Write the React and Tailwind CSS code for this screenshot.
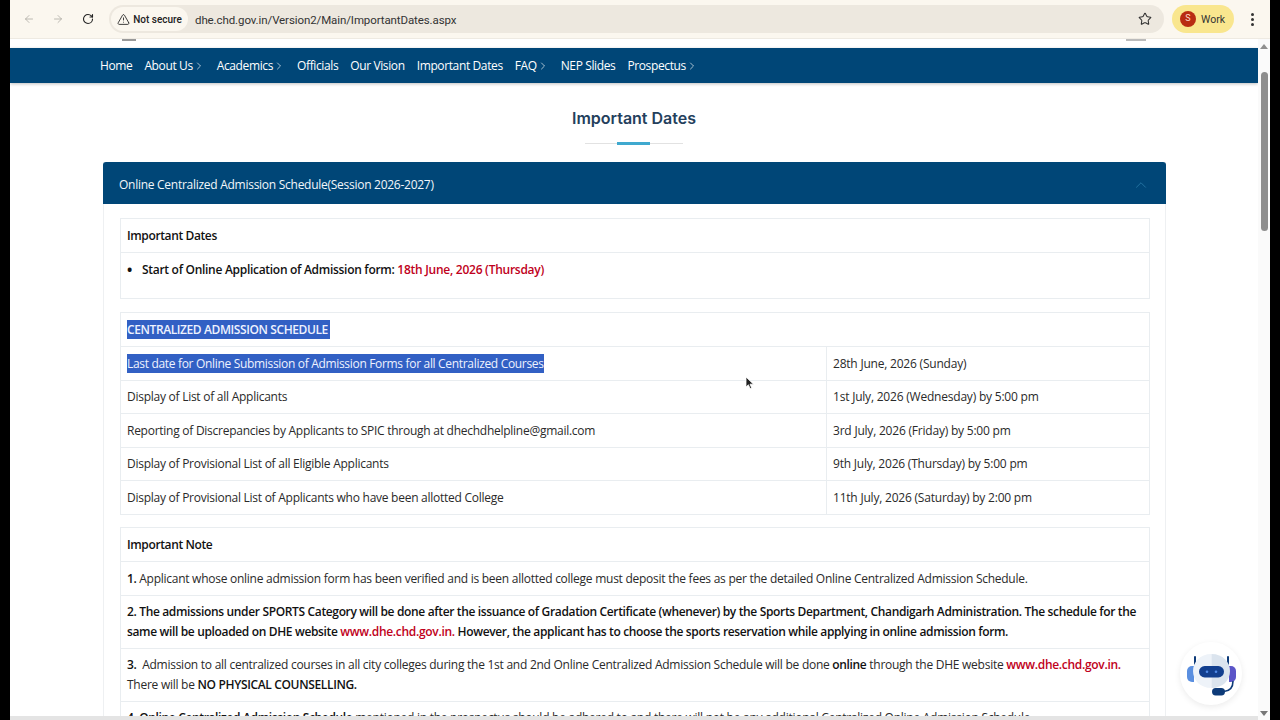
import React from "react";
import { ArrowLeft, ArrowRight, RotateCw, TriangleAlert, Star, ChevronRight, ChevronUp } from "lucide-react";

const NavItem = ({ label, chevron }) => (
  <span className="flex items-center whitespace-nowrap">
    {label}
    {chevron && <ChevronRight size={12} strokeWidth={1.3} />}
  </span>
);

const Red = ({ children }) => <span className="text-[#c00020] font-semibold tracking-[-0.3px]">{children}</span>;
const B = ({ children }) => <span className="font-semibold text-[#111] tracking-[-0.35px]">{children}</span>;

const Row = ({ a, b, selected }) => (
  <div className="flex h-[33.5px] border-t border-[#e9edf0] items-center">
    <div className="w-[706px] pl-[6px] h-full flex items-center border-r border-[#e9edf0]">
      {selected ? <span className="bg-[#3260c4] text-[#eef2ff] h-[19px] flex items-center tracking-[-0.32px]">{a}</span> : a}
    </div>
    <div className="pl-[6px] tracking-[-0.21px]">{b}</div>
  </div>
);

export default function App() {
  return (
    <div className="w-[1280px] h-[720px] bg-black overflow-hidden px-[10px] text-[#2a2a2a]" style={{ fontFamily: '"Open Sans", "Noto Sans", sans-serif' }}>
      <div className="w-[1260px] h-[720px] flex flex-col bg-white">
        {/* browser toolbar */}
        <div className="h-[39px] shrink-0 bg-[#fbf7ef] border-b border-[#eeeae2] flex items-center">
          <div className="flex items-center w-[99px] shrink-0 pl-[13px] gap-[17px]">
            <ArrowLeft size={12} strokeWidth={1.5} className="text-[#a8a69f]" />
            <ArrowRight size={12} strokeWidth={1.5} className="text-[#a8a69f] " />
            <RotateCw size={12} strokeWidth={2.2} className="text-[#222] ml-[1px]" />
          </div>
          <div className="w-[1055px] h-[28px] shrink-0 rounded-full bg-[#ede8df] flex items-center pl-[2px] pr-[12px]">
            <span className="h-[24px] w-[77px] rounded-full bg-[#fbf7ef] flex items-center justify-center gap-[3px] text-[10px] font-medium text-[#222]" style={{ fontFamily: '"Roboto", sans-serif' }}>
              <TriangleAlert size={13} strokeWidth={1.6} />
              Not secure
            </span>
            <span className="ml-[7px] mt-[4px] text-[11.5px] tracking-[-0.1px] text-[#333]" style={{ fontFamily: '"Roboto", sans-serif' }}>dhe.chd.gov.in/Version2/Main/ImportantDates.aspx</span>
            <Star size={14} strokeWidth={1.8} className="ml-auto text-[#333]" />
          </div>
          <div className="ml-[8px] h-[28px] w-[62px] rounded-full bg-[#f9e68e] flex items-center pl-[8px] gap-[5px] text-[10.5px] text-[#333]" style={{ fontFamily: '"Roboto", sans-serif' }}>
            <span className="w-[16px] h-[16px] rounded-full bg-[#b92c12] text-[#ffd8cc] text-[9px] flex items-center justify-center">S</span>
            <span className="mt-[2px]">Work</span>
          </div>
          <div className="ml-[17px] flex flex-col gap-[2px]">
            <span className="w-[3px] h-[3px] rounded-full bg-[#333]" />
            <span className="w-[3px] h-[3px] rounded-full bg-[#333]" />
            <span className="w-[3px] h-[3px] rounded-full bg-[#333]" />
          </div>
        </div>

        <div className="flex flex-1 min-h-0">
          {/* page */}
          <div className="w-[1248px] shrink-0 flex flex-col overflow-hidden">
            <div className="h-[9px] shrink-0 flex justify-between pl-[112px] pr-[112px]">
              <span className="w-[14px] h-[2px] bg-[#999]" />
              <span className="w-[20px] h-[2px] bg-[#bbb]" />
            </div>
            <div className="h-[35px] shrink-0 bg-[#004677] shadow-[0_1px_3px_rgba(0,0,0,0.25)] text-white text-[12px] tracking-[-0.38px] flex items-center pl-[90px] gap-[12px]">
              <NavItem label="Home" />
              <NavItem label="About Us" chevron />
              <NavItem label="Academics" chevron />
              <NavItem label="Officials" />
              <NavItem label="Our Vision" />
              <NavItem label="Important Dates" />
              <NavItem label="FAQ" chevron />
              <NavItem label="NEP Slides" />
              <NavItem label="Prospectus" chevron />
            </div>

            <h1 className="mt-[25px] text-center text-[16px] leading-[20px] font-semibold text-[#24405c]" style={{ fontFamily: '"Inter", "Open Sans", sans-serif' }}>Important Dates</h1>
            <div className="mt-[14px] mx-auto w-[98px] h-[3px] flex items-center relative">
              <div className="w-full h-px bg-[#e2e2e2]" />
              <div className="absolute left-[32px] top-0 w-[33px] h-[3px] bg-[#3fa9cf]" />
            </div>

            <div className="mt-[17px] ml-[93px] w-[1063px] flex-1 min-h-0 border-x border-[#eef0f2] text-[12px] tracking-[-0.26px]">
              <div className="h-[42px] -mx-px bg-[#004677] rounded-t-[3px] flex items-center justify-between pt-[3px] pl-[16px] pr-[16px] text-[#f2f6fa] text-[12px] tracking-[-0.27px]">
                <span>Online Centralized Admission Schedule(Session 2026-2027)</span>
                <ChevronUp size={18} strokeWidth={1} className="text-[#2d80ad]" />
              </div>
              <div className="pt-[14px] pl-[16px] pr-[15px] leading-[20px]">
                <div className="border border-[#e9edf0] h-[81px]">
                  <div className="h-[33px] pl-[6px] flex items-center font-semibold text-[#111] tracking-[-0.38px]">Important Dates</div>
                  <div className="border-t border-[#e9edf0] pl-[6px] pt-[7px] flex items-start">
                    <span className="w-[15px] font-bold text-[#111] text-[14px]">•</span>
                    <span className="font-semibold text-[#111] tracking-[-0.29px]">Start of Online Application of Admission form: <span className="text-[#c00020] tracking-[-0.26px]">18th June, 2026 (Thursday)</span></span>
                  </div>
                </div>

                <div className="mt-[13px] border border-[#e9edf0]">
                  <div className="h-[33.3px] pl-[6px] flex items-center"><span className="bg-[#3260c4] text-[#eef2ff] font-semibold h-[19px] flex items-center pr-[2px] tracking-[-0.4px]">CENTRALIZED ADMISSION SCHEDULE</span></div>
                  <Row selected a="Last date for Online Submission of Admission Forms for all Centralized Courses" b="28th June, 2026 (Sunday)" />
                  <Row a="Display of List of all Applicants" b="1st July, 2026 (Wednesday) by 5:00 pm" />
                  <Row a="Reporting of Discrepancies by Applicants to SPIC through at dhechdhelpline@gmail.com" b="3rd July, 2026 (Friday) by 5:00 pm" />
                  <Row a="Display of Provisional List of all Eligible Applicants" b="9th July, 2026 (Thursday) by 5:00 pm" />
                  <Row a="Display of Provisional List of Applicants who have been allotted College" b="11th July, 2026 (Saturday) by 2:00 pm" />
                </div>

                <div className="mt-[12.7px] border border-[#e9edf0]">
                  <div className="h-[33px] pl-[6px] flex items-center font-semibold text-[#111] tracking-[-0.38px]">Important Note</div>
                  <div className="border-t border-[#e9edf0] h-[33.5px] px-[6px] flex items-center whitespace-nowrap">
                    <span><B>1. </B>Applicant whose online admission form has been verified and is been allotted college must deposit the fees as per the detailed Online Centralized Admission Schedule.</span>
                  </div>
                  <div className="border-t border-[#e9edf0] px-[6px] py-[6px]">
                    <B>2. The admissions under SPORTS Category will be done after the issuance of Gradation Certificate (whenever) by the Sports Department, Chandigarh Administration. The schedule for the same will be uploaded on DHE website </B><Red>www.dhe.chd.gov.in.</Red><B> However, the applicant has to choose the sports reservation while applying in online admission form.</B>
                  </div>
                  <div className="border-t border-[#e9edf0] px-[6px] py-[6px]">
                    <B>3.</B>&nbsp; Admission to all centralized courses in all city colleges during the 1st and 2nd Online Centralized Admission Schedule will be done <B>online</B> through the DHE website <Red>www.dhe.chd.gov.in.</Red> There will be <B>NO PHYSICAL COUNSELLING.</B>
                  </div>
                  <div className="border-t border-[#e9edf0] px-[6px] py-[6px] whitespace-nowrap">
                    <B>4. Online Centralized Admission Schedule</B> mentioned in the prospectus should be adhered to and there will not be any additional Centralized Online Admission Schedule.
                  </div>
                </div>
              </div>
            </div>
            <div className="h-[4px] shrink-0 bg-[#e4e4e4]" />
          </div>

          {/* scrollbar */}
          <div className="w-[12px] shrink-0 bg-[#fafafa] flex flex-col items-center pt-[5px]">
            <div className="w-0 h-0 border-x-[4px] border-x-transparent border-b-[5px] border-b-[#8f8f8f]" />
            <div className="mt-[23px] w-[7px] h-[159px] rounded-full bg-[#8e8e8e]" />
            <div className="mt-auto mb-[4px] w-0 h-0 border-x-[4px] border-x-transparent border-t-[5px] border-t-[#777]" />
          </div>
        </div>
      </div>

      {/* mouse pointer */}
      <svg className="absolute left-[745px] top-[376px]" width="10" height="14" viewBox="0 0 10 14">
        <path d="M1 1v10l2.4-2.2 1.7 3.8 1.6-.7-1.7-3.7H8.5z" fill="#222" stroke="#fff" strokeWidth="0.8" />
      </svg>

      {/* chatbot */}
      <div className="absolute left-[1180px] top-[642px] w-[62px] h-[63px] rounded-full bg-white shadow-[0_2px_6px_rgba(0,0,0,0.08)] flex items-center justify-center">
        <svg width="54" height="54" viewBox="0 0 54 54">
          <rect x="10" y="9" width="2" height="10" rx="1" fill="#0d3a78" />
          <rect x="43" y="9" width="2" height="10" rx="1" fill="#0d3a78" />
          <path d="M3 24a5 5 0 0 1 5-5h2v16H8a5 5 0 0 1-5-5z" fill="#5a8fe0" />
          <path d="M52 24a5 5 0 0 0-5-5h-2v16h2a5 5 0 0 0 5-5z" fill="#5b55c8" />
          <path d="M27.5 7C16 7 9 15 9 24s7 17 18.5 17z" fill="#eef3f9" />
          <path d="M27.5 7C39 7 46 15 46 24s-7 17-18.5 17z" fill="#dbe4ee" />
          <rect x="15" y="19" width="25" height="11.5" rx="5.7" fill="#123f8f" />
          <circle cx="23" cy="24.7" r="1.3" fill="#4f8ae8" />
          <circle cx="32" cy="24.7" r="1.3" fill="#4f8ae8" />
          <path d="M49 34c0 6-3 10-9 10.5" fill="none" stroke="#0d3a78" strokeWidth="1.6" />
          <rect x="28" y="41" width="13" height="7.5" rx="3.7" fill="#0d3a78" />
        </svg>
      </div>
    </div>
  );
}
